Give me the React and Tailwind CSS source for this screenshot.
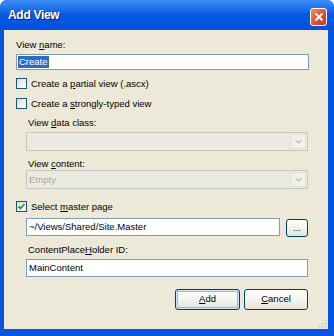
import React from 'react';

const font = { fontFamily: '"Liberation Sans", Arial, sans-serif' };

function U({ children }) {
  return <span className="underline underline-offset-[1px]">{children}</span>;
}

function Check({ checked }) {
  return (
    <div className="w-[11px] h-[11px] border border-[#1c5180] bg-gradient-to-br from-[#dcdcd6] to-white flex items-center justify-center">
      {checked && (
        <svg width="9" height="9" viewBox="0 0 9 9">
          <path d="M1.5 4.5 L3.5 6.5 L7.5 2" stroke="#21a121" strokeWidth="1.8" fill="none" />
        </svg>
      )}
    </div>
  );
}

function CheckRow({ checked, children, className }) {
  return (
    <div className={`flex items-center h-[13px] gap-[4px] ${className}`}>
      <Check checked={checked} />
      <span className="text-[9.5px] text-black leading-[13px]">{children}</span>
    </div>
  );
}

function Combo({ value, className }) {
  return (
    <div className={`flex h-[19px] border border-[#c9c7ba] bg-[#ebeae2] ${className}`}>
      <div className="flex-1 text-[9.5px] text-[#aca899] pl-[2px] leading-[17px]">{value}</div>
      <div className="w-[15px] m-[1px] border border-[#e3e2d9] bg-[#f1f0ea] flex items-center justify-center">
        <svg width="7" height="5" viewBox="0 0 7 5">
          <path d="M0.5 1 L3.5 4 L6.5 1" stroke="#c3c2b8" strokeWidth="1.3" fill="none" />
        </svg>
      </div>
    </div>
  );
}

function Button({ children, primary, className }) {
  return (
    <div
      className={`rounded-[3px] border border-[#003c74] bg-gradient-to-b from-white via-[#f4f4f0] to-[#e3e3db] flex items-center justify-center text-[9.5px] text-black ${
        primary ? 'shadow-[inset_0_0_0_1px_#cee7ff,inset_0_0_0_2px_#98b8ea]' : ''
      } ${className}`}
    >
      {children}
    </div>
  );
}

export default function App() {
  return (
    <div className="w-[334px] h-[336px] bg-[#0a53df] rounded-t-[7px] flex flex-col" style={font}>
      <div className="h-[30px] rounded-t-[7px] bg-gradient-to-b from-[#3d8ff6] via-[#0658e4] to-[#0150dc] flex items-center justify-between pl-[8px] pr-[7px]">
        <span className="text-white font-bold text-[12px] tracking-[-0.3px] [text-shadow:1px_1px_0_#0a246a]">
          Add View
        </span>
        <div className="w-[17px] h-[18px] mt-[3px] rounded-[3px] border border-white bg-gradient-to-br from-[#eb8f74] via-[#dc5530] to-[#c23a1a] flex items-center justify-center">
          <svg width="10" height="10" viewBox="0 0 10 10">
            <path d="M1.5 1.5 L8.5 8.5 M8.5 1.5 L1.5 8.5" stroke="white" strokeWidth="1.8" />
          </svg>
        </div>
      </div>
      <div className="relative flex-1 ml-[4px] mr-[6px] mb-[7px] bg-[#ece9d8] pl-[12px] flex flex-col">
        <div className="mt-[9px] h-[12px] text-[9.5px] leading-[12px] text-black">
          View <U>n</U>ame:
        </div>
        <div className="mt-[3px] w-[293px] h-[16px] border border-[#7f9db9] bg-white flex items-center pl-[1px]">
          <span className="bg-[#316ac5] text-white text-[9.5px] leading-[12px] px-[1px]">Create</span>
        </div>
        <CheckRow className="mt-[7px]">
          Create a <U>p</U>artial view (.ascx)
        </CheckRow>
        <CheckRow className="mt-[7px]">
          Create a <U>s</U>trongly-typed view
        </CheckRow>
        <div className="mt-[7px] ml-[12px] h-[12px] text-[9.5px] leading-[12px] text-black">
          View <U>d</U>ata class:
        </div>
        <Combo className="mt-[3px] ml-[10px] w-[282px]" />
        <div className="mt-[7px] ml-[12px] h-[12px] text-[9.5px] leading-[12px] text-black">
          View <U>c</U>ontent:
        </div>
        <Combo value="Empty" className="mt-[0px] ml-[10px] w-[282px]" />
        <CheckRow checked className="mt-[11px]">
          Select <U>m</U>aster page
        </CheckRow>
        <div className="mt-[5px] ml-[10px] flex items-start gap-[6px]">
          <div className="w-[254px] h-[18px] border border-[#7f9db9] bg-white text-[9.5px] leading-[16px] pl-[2px] text-black">
            ~/Views/Shared/Site.Master
          </div>
          <Button className="w-[22px] h-[18px] mt-[1px] text-[#6e6e6e]">...</Button>
        </div>
        <div className="mt-[7px] ml-[12px] h-[12px] text-[9.5px] leading-[12px] text-black">
          ContentPlace<U>H</U>older ID:
        </div>
        <div className="mt-[3px] ml-[10px] w-[282px] h-[18px] border border-[#7f9db9] bg-white text-[9.5px] leading-[16px] pl-[2px] text-black">
          MainContent
        </div>
        <div className="mt-[12px] flex justify-end gap-[4px] pr-[20px]">
          <Button primary className="w-[65px] h-[21px]">
            <U>A</U>dd
          </Button>
          <Button className="w-[64px] h-[21px]">
            <U>C</U>ancel
          </Button>
        </div>
        <svg className="absolute right-[1px] bottom-[1px]" width="10" height="10" viewBox="0 0 10 10">
          {[
            [8, 2], [8, 5], [5, 5], [8, 8], [5, 8], [2, 8],
          ].map(([x, y]) => (
            <rect key={`${x}-${y}`} x={x} y={y} width="1.5" height="1.5" fill="#c5c2b2" />
          ))}
        </svg>
      </div>
    </div>
  );
}
